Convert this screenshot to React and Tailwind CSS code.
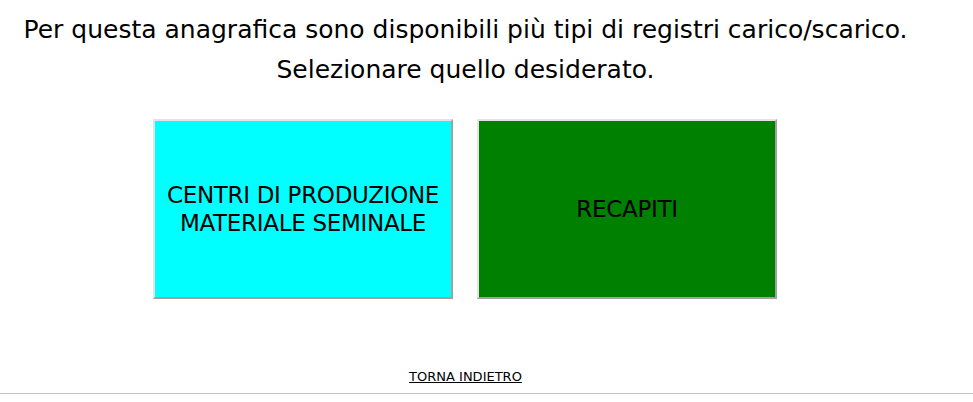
import React from "react"

const FONT = "font-['DejaVu_Sans',sans-serif]"

function ChoiceBox({ label, color }) {
    return (
        <button
            className={`w-[300px] h-[180px] shrink-0 flex items-center justify-center text-center border-2 border-solid border-t-[#e3e3e3] border-l-[#e3e3e3] border-r-[#a0a0a0] border-b-[#a0a0a0] text-[23px] leading-[28px] tracking-[-0.3px] text-black ${color}`}
        >
            {label}
        </button>
    )
}

export default function App() {
    return (
        <div className={`w-[973px] h-[402px] bg-white flex flex-col ${FONT}`}>
            <div className="w-[931px] flex flex-col items-center">
                <h1 className="mt-[10px] text-center text-[25px] leading-[40px] font-normal text-black">
                    Per questa anagrafica sono disponibili più tipi di registri carico/scarico.
                    <br />
                    Selezionare quello desiderato.
                </h1>
                <div className="mt-[29px] self-start ml-[153px] flex gap-6">
                    <ChoiceBox
                        color="bg-[#00ffff]"
                        label={<>CENTRI DI PRODUZIONE<br />MATERIALE SEMINALE</>}
                    />
                    <ChoiceBox color="bg-[#008000]" label="RECAPITI" />
                </div>
                <a href="#" className="mt-[70px] text-[13px] leading-[16px] text-black underline">
                    TORNA INDIETRO
                </a>
            </div>
            <div className="mt-auto mb-[8px] h-px bg-[#c4c4c4]" />
        </div>
    )
}
